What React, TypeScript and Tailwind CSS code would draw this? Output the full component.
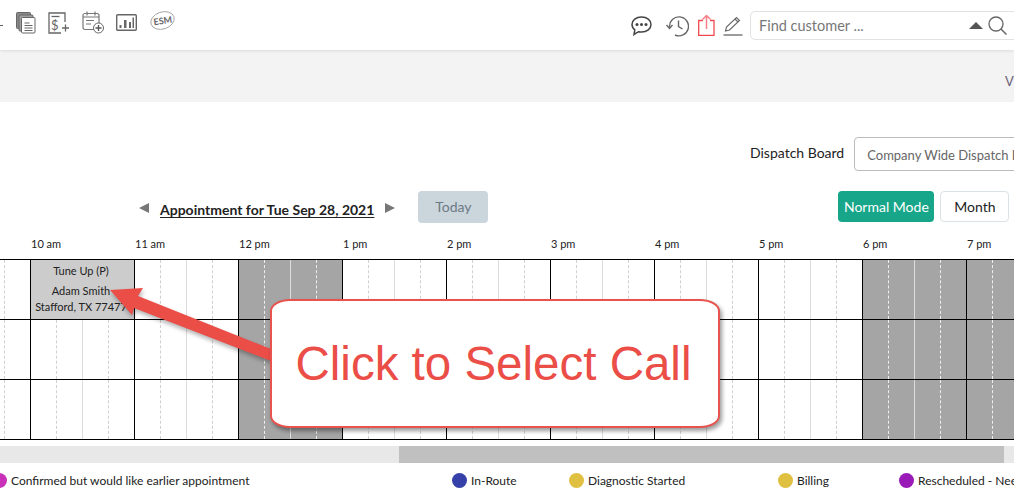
const HOURS = [
  { label: "10 am", event: true },
  { label: "11 am" },
  { label: "12 pm", closed: true },
  { label: "1 pm" },
  { label: "2 pm" },
  { label: "3 pm" },
  { label: "4 pm" },
  { label: "5 pm" },
  { label: "6 pm", closed: true },
  { label: "7 pm", closed: true },
];

const LEGEND = [
  { label: "Confirmed but would like earlier appointment", color: "bg-[#c932b8]", width: "w-[460px]" },
  { label: "In-Route", color: "bg-[#3540a8]", width: "w-[117px]" },
  { label: "Diagnostic Started", color: "bg-[#e0c040]", width: "w-[209px]" },
  { label: "Billing", color: "bg-[#e0c040]", width: "w-[121px]" },
  { label: "Rescheduled - Need Parts", color: "bg-[#9a1ab8]", width: "w-[200px]" },
];

function DocsIcon() {
  return (
    <svg width="20" height="22" viewBox="0 0 20 22" fill="none">
      <rect x="0.5" y="0.5" width="14" height="16" rx="1" fill="#8a8a8a" stroke="#666" />
      <rect x="3" y="3" width="14" height="16" rx="1" fill="#a0a0a0" stroke="#666" />
      <rect x="5.5" y="5.5" width="13.5" height="15.5" rx="1" fill="#fff" stroke="#666" />
      <path d="M8.5 11h5M8.5 13.5h8M8.5 16h8M8.5 18.5h8" stroke="#666" />
    </svg>
  );
}

function BillIcon() {
  return (
    <svg width="22" height="22" viewBox="0 0 22 22" fill="none">
      <path d="M13 21H1V1h16v9" stroke="#666" strokeWidth="1.300" />
      <path d="M3.500 4.500h8" stroke="#666" strokeWidth="1.300" />
      <text x="3" y="18" fontSize="13" fontFamily="Lato" fill="#666">$</text>
      <path d="M17.500 12.500v7M14 16h7" stroke="#666" strokeWidth="1.300" />
    </svg>
  );
}

function CalendarPlusIcon() {
  return (
    <svg width="23" height="23" viewBox="0 0 23 23" fill="none">
      <rect x="1" y="2.500" width="16" height="16" rx="2" stroke="#777" strokeWidth="1.200" />
      <path d="M1 6h16M5 0.500v4M13 0.500v4M4 9.500h8M4 13h5" stroke="#777" strokeWidth="1.200" />
      <circle cx="16.500" cy="17" r="5" fill="#fff" stroke="#666" />
      <path d="M16.500 14v6M13.500 17h6" stroke="#555" strokeWidth="1.300" />
    </svg>
  );
}

function ChartIcon() {
  return (
    <svg width="21" height="18" viewBox="0 0 21 18" fill="none">
      <rect x="0.700" y="0.700" width="19.600" height="15.600" rx="1" stroke="#666" strokeWidth="1.400" />
      <path d="M3.500 11h2v3h-2zM8 6h2.500v8H8zM13 8h2v6h-2zM16.500 3.500h1.500V14h-1.500z" fill="#666" />
    </svg>
  );
}

function EsmIcon() {
  return (
    <svg width="25" height="21" viewBox="0 0 25 21" fill="none">
      <ellipse cx="12.500" cy="10.500" rx="12" ry="8.500" transform="rotate(-18 12.500 10.500)" stroke="#999" strokeWidth="0.800" />
      <text x="3.500" y="14" fontSize="9" fontWeight="700" fontFamily="Lato" fill="#666" transform="rotate(-8 12.500 10.500)">ESM</text>
    </svg>
  );
}

function ChatIcon() {
  return (
    <svg width="21" height="20" viewBox="0 0 21 20" fill="none">
      <path d="M10.500 1C5 1 1 4.300 1 8.500c0 2.200 1 4 2.800 5.300L3 18.500l4.500-2.800c1 .3 2 .4 3 .4 5.500 0 9.500-3.400 9.500-7.600S16 1 10.500 1z" stroke="#444" strokeWidth="1.500" />
      <circle cx="6" cy="8.500" r="1.500" fill="#444" />
      <circle cx="10.500" cy="8.500" r="1.500" fill="#444" />
      <circle cx="15" cy="8.500" r="1.500" fill="#444" />
    </svg>
  );
}

function HistoryIcon() {
  return (
    <svg width="23" height="22" viewBox="0 0 23 22" fill="none">
      <path d="M3.500 12A9.500 9.500 0 1 1 9 20" stroke="#666" strokeWidth="1.400" />
      <path d="M0.500 10l3 3.500 3-3.500" stroke="#666" strokeWidth="1.400" />
      <path d="M12.500 5.500v6l4 2.500" stroke="#666" strokeWidth="1.400" />
    </svg>
  );
}

function ShareIcon() {
  return (
    <svg width="17" height="21" viewBox="0 0 17 21" fill="none">
      <path d="M5 5.500H0.700v14.800h15.300V5.500H12" stroke="#f04a50" strokeWidth="1.300" />
      <path d="M8.500 14V1M4.500 4.500l4-4 4 4" stroke="#f98088" strokeWidth="1.500" />
    </svg>
  );
}

function PencilIcon() {
  return (
    <svg width="20" height="20" viewBox="0 0 20 20" fill="none">
      <path d="M2.500 15l1-4L13.500 1.500l3 3L6.500 14z" stroke="#666" strokeWidth="1.100" />
      <path d="M12 3l3 3" stroke="#666" strokeWidth="1.100" />
      <path d="M0.500 19h19" stroke="#666" strokeWidth="1.300" />
    </svg>
  );
}

function SearchIcon() {
  return (
    <svg width="19" height="19" viewBox="0 0 19 19" fill="none">
      <circle cx="8" cy="8" r="7" stroke="#666" strokeWidth="1.300" />
      <path d="M13 13l5.500 5.500" stroke="#666" strokeWidth="1.500" />
    </svg>
  );
}

function HourCell({ closed, event }: { closed?: boolean; event?: boolean }) {
  const dashed = closed ? "border-r border-dashed border-[#eeeeee]" : "border-r border-dashed border-[#d0d0d0]";
  const solid = closed ? "border-r border-[#dddddd]" : "border-r border-[#dcdcdc]";
  return (
    <div className={`flex w-[104px] shrink-0 border-l border-black ${closed ? "bg-[#a5a5a5]" : "bg-white"}`}>
      {event ? (
        <div className="flex w-full flex-col items-center whitespace-nowrap bg-[#cccccc] pr-[3px] text-[11px] leading-4 text-[#222222]">
          <span className="mt-[3px]">Tune Up (P)</span>
          <span className="mt-1">Adam Smith</span>
          <span>Stafford, TX 77477</span>
        </div>
      ) : (
        <>
          <div className={`w-[26px] ${dashed}`} />
          <div className={`w-[26px] ${solid}`} />
          <div className={`w-[26px] ${dashed}`} />
          <div className="w-[25px]" />
        </>
      )}
    </div>
  );
}

function ScheduleRow({ withEvent }: { withEvent?: boolean }) {
  return (
    <div className="flex h-[60px] border-b border-black">
      <div className="flex w-[30px] shrink-0">
        <div className="w-[5px] border-r border-dashed border-[#d0d0d0]" />
      </div>
      {HOURS.map((hour) => (
        <HourCell key={hour.label} closed={hour.closed} event={withEvent && hour.event} />
      ))}
    </div>
  );
}

export default function App() {
  return (
    <div className="relative h-[489px] w-[1014px] overflow-hidden bg-white font-['Lato',sans-serif] text-sm text-[#222222]">
      <header className="relative z-10 flex h-[50px] items-center bg-white shadow-[0_1px_3px_rgba(0,0,0,0.1)]">
        <div className="h-px w-[3px] shrink-0 bg-[#666666]" />
        <div className="ml-[13px] -mt-[5px] flex items-center">
          <DocsIcon />
          <div className="ml-[12px]"><BillIcon /></div>
          <div className="ml-3"><CalendarPlusIcon /></div>
          <div className="ml-[11px]"><ChartIcon /></div>
          <div className="ml-[13px] -mt-1"><EsmIcon /></div>
        </div>
        <div className="ml-[456px] mt-px flex items-center">
          <ChatIcon />
          <div className="ml-[14px]"><HistoryIcon /></div>
          <div className="ml-[9px]"><ShareIcon /></div>
          <div className="ml-[8px]"><PencilIcon /></div>
          <div className="ml-[7px] flex h-[29px] w-[270px] shrink-0 items-center rounded-[5px] border border-[#e2e2e2] pl-2">
            <span className="mt-[2px] w-[210px] shrink-0 text-[14.500px] text-[#777777]">Find customer ...</span>
            <div className="h-0 w-0 border-x-[7px] border-b-[7px] border-x-transparent border-b-[#555555]" />
            <div className="ml-[5px]"><SearchIcon /></div>
          </div>
        </div>
      </header>

      <div className="h-[52px] whitespace-nowrap bg-[#f3f3f3] pl-[1005px] pt-[23px] text-[13px] leading-4 text-[#6a5f78]">View</div>

      <div className="flex h-[89px] items-start whitespace-nowrap pl-[750px] pt-[35px]">
        <span className="mt-[6px] text-sm leading-5">Dispatch Board</span>
        <div className="ml-[10px] h-[34px] w-[300px] shrink-0 rounded border border-[#bbbbbb] pl-3 pt-[7px] text-[13px] leading-5 text-[#666666]">
          Company Wide Dispatch Board
        </div>
      </div>

      <div className="flex h-[32px] items-start">
        <div className="ml-[139px] mt-[12px] h-0 w-0 border-y-[5px] border-r-[10px] border-y-transparent border-r-[#777777]" />
        <span className="ml-[11px] mt-[9px] text-sm font-bold leading-[20px] text-[#222222] underline decoration-1 underline-offset-2">
          Appointment for Tue Sep 28, 2021
        </span>
        <div className="ml-[11px] mt-[12px] h-0 w-0 border-y-[5px] border-l-[10px] border-y-transparent border-l-[#777777]" />
        <div className="ml-[23px] flex h-[32px] w-[70px] items-center justify-center rounded bg-[#cbd5dc] text-sm text-[#6b7a85]">Today</div>
        <div className="ml-[350px] flex h-[31px] w-[96px] items-center justify-center rounded bg-[#17a689] text-sm text-white">Normal Mode</div>
        <div className="ml-[6px] flex h-[31px] w-[69px] items-center justify-center rounded border border-[#dbe2e6] text-sm">Month</div>
      </div>

      <div className="flex h-[36px] items-start pl-[31px] pt-[13px] text-[11px] leading-4 text-[#222222]">
        {HOURS.map((hour) => (
          <span key={hour.label} className="w-[104px] shrink-0">{hour.label}</span>
        ))}
      </div>

      <div className="border-t border-black">
        <ScheduleRow withEvent />
        <ScheduleRow />
        <ScheduleRow />
      </div>

      <div className="mt-[6px] h-[17px] bg-[#e8e8e8] pl-[399px]">
        <div className="h-full w-[605px] bg-[#c0c0c0]" />
      </div>

      <div className="-ml-[8px] mt-[10px] flex text-xs leading-[15px] text-[#222222]">
        {LEGEND.map((item) => (
          <div key={item.label} className={`flex shrink-0 items-center gap-1 whitespace-nowrap ${item.width}`}>
            <span className={`h-[15px] w-[15px] shrink-0 rounded-full ${item.color}`} />
            <span>{item.label}</span>
          </div>
        ))}
      </div>

      {/* annotation arrow drawn over the board */}
      <svg className="absolute left-[100px] top-[280px] drop-shadow-[1px_3px_2px_rgba(0,0,0,0.3)]" width="180" height="90" viewBox="100 280 180 90" fill="none">
        <path d="M110 290L143 288L138 296L271 349V361L134 308L132 315Z" fill="#eb4d47" />
      </svg>

      <div className="absolute left-[270px] top-[299px] flex h-[129px] w-[450px] items-center justify-center rounded-[20px/12px] border-2 border-[#e8534e] bg-white pr-[3px] shadow-[2px_3px_4px_rgba(0,0,0,0.4)] font-['Liberation_Sans',sans-serif] text-[47.500px] leading-none text-[#eb4d47]">
        Click to Select Call
      </div>
    </div>
  );
}
